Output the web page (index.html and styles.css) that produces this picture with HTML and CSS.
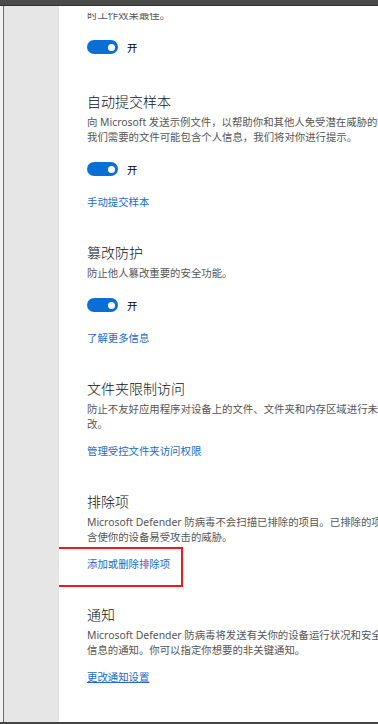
FILE: index.html
```html
<!DOCTYPE html>
<html lang="zh-CN">
<head>
  <meta charset="UTF-8">
  <meta name="viewport" content="width=device-width, initial-scale=1.0">
  <title>病毒和威胁防护设置</title>
  <link rel="stylesheet" href="styles.css">
</head>
<body>

  <div class="topbar"></div>

  <div class="window">
    <div class="behind"></div>
    <div class="edge"></div>
    <div class="nav"></div>

    <main class="page">
      <div class="scroll">

        <section class="section first">
          <p class="desc clipped">时工作效果最佳。</p>
          <div class="toggle-row">
            <span class="toggle"><span class="knob"></span></span>
            <span class="toggle-label">开</span>
          </div>
        </section>

        <section class="section">
          <h2>自动提交样本</h2>
          <p class="desc">向 Microsoft 发送示例文件，以帮助你和其他人免受潜在威胁的侵害。如果<br>我们需要的文件可能包含个人信息，我们将对你进行提示。</p>
          <div class="toggle-row">
            <span class="toggle"><span class="knob"></span></span>
            <span class="toggle-label">开</span>
          </div>
          <a class="link after-toggle" href="#">手动提交样本</a>
        </section>

        <section class="section">
          <h2>篡改防护</h2>
          <p class="desc">防止他人篡改重要的安全功能。</p>
          <div class="toggle-row">
            <span class="toggle"><span class="knob"></span></span>
            <span class="toggle-label">开</span>
          </div>
          <a class="link after-toggle" href="#">了解更多信息</a>
        </section>

        <section class="section">
          <h2>文件夹限制访问</h2>
          <p class="desc">防止不友好应用程序对设备上的文件、文件夹和内存区域进行未经授权的更<br>改。</p>
          <a class="link" href="#">管理受控文件夹访问权限</a>
        </section>

        <section class="section">
          <h2>排除项</h2>
          <p class="desc">Microsoft Defender 防病毒不会扫描已排除的项目。已排除的项目可能包<br>含使你的设备易受攻击的威胁。</p>
          <a class="link marked" href="#">添加或删除排除项</a>
        </section>

        <section class="section">
          <h2>通知</h2>
          <p class="desc">Microsoft Defender 防病毒将发送有关你的设备运行状况和安全性的关键<br>信息的通知。你可以指定你想要的非关键通知。</p>
          <a class="link hover" href="#">更改通知设置</a>
        </section>

      </div>
    </main>
  </div>

  <div class="bottombar"></div>

</body>
</html>
```

FILE: styles.css
```css
body {
  margin: 0;
  height: 724px;
  overflow: hidden;
  display: flex;
  flex-direction: column;
  background-color: #fff;
  font-family: "Noto Sans", "Noto Sans CJK SC", sans-serif;
}

.topbar {
  height: 6px;
  flex-shrink: 0;
  background-color: #4a4a4a;
  border-bottom: 1px solid #303030;
  box-sizing: border-box;
}

.bottombar {
  height: 2px;
  flex-shrink: 0;
  background-color: #454545;
}

.window {
  flex: 1;
  display: flex;
  min-height: 0;
}

.behind {
  width: 3px;
  background-color: #f2f2f2;
}

.edge {
  width: 1px;
  background-color: #6a6a6a;
}

.nav {
  width: 55px;
  background-color: #e6e6e6;
}

.page {
  flex: 1;
  min-width: 0;
  display: flex;
  flex-direction: column;
  padding-top: 7px;
  background-color: #fff;
}

.scroll {
  flex: 1;
  overflow: hidden;
  padding-left: 28px;
  white-space: nowrap;
}

.section {
  padding-bottom: 33px;
}

.section.first {
  padding-bottom: 38px;
}

h2 {
  margin: 0;
  font-size: 14px;
  line-height: 20px;
  font-weight: 300;
  color: #111;
}

.desc {
  margin: 3px 0 0;
  font-size: 10.4px;
  line-height: 15px;
  color: #555;
}

.desc.clipped {
  margin-top: -5px;
}

.toggle-row {
  display: flex;
  align-items: center;
  gap: 9px;
  height: 14px;
  margin-top: 17px;
}

.toggle {
  width: 31px;
  height: 14px;
  border-radius: 7px;
  background-color: #0a6fd4;
  display: flex;
  align-items: center;
  justify-content: flex-end;
  padding-right: 3px;
  box-sizing: border-box;
}

.knob {
  width: 7px;
  height: 7px;
  border-radius: 50%;
  background-color: #fff;
}

.toggle-label {
  font-size: 10.4px;
  color: #000;
}

.link {
  display: block;
  width: max-content;
  margin-top: 12px;
  font-size: 10.4px;
  line-height: 15px;
  color: #1a6cc8;
  text-decoration: none;
}

.link.after-toggle {
  margin-top: 19px;
}

.link.hover {
  text-decoration: underline;
}

/* red annotation box drawn over the screenshot */
.link.marked {
  position: relative;
}

.link.marked::after {
  content: "";
  position: absolute;
  left: -32px;
  top: -10px;
  width: 128px;
  height: 40px;
  border: 2px solid #f01818;
  box-sizing: border-box;
}
```
